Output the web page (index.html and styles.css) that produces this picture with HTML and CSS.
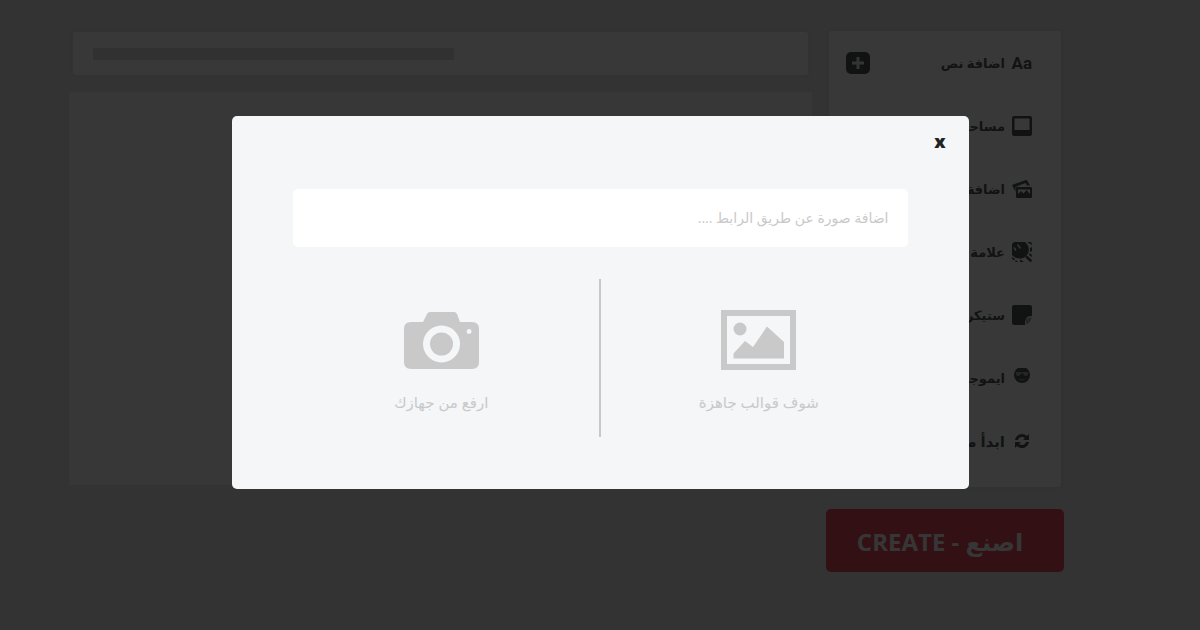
FILE: index.html
```
<!DOCTYPE html>
<html lang="ar" dir="rtl">

<head>
    <meta charset="UTF-8">
    <meta name="viewport" content="width=device-width, initial-scale=1.0">
    <title>اصنع - CREATE</title>
    <link rel="stylesheet" href="styles.css">
</head>

<body>
    <div class="page">
        <aside class="side">
            <ul class="tools">
                <li class="tool">
                    <span class="tool-icon letters">Aa</span>
                    <span class="tool-name">اضافة نص</span>
                    <button class="add" type="button" aria-label="اضافة">
                        <svg viewBox="0 0 24 22"><path d="M10.500 5h3v4.500H18v3h-4.500V17h-3v-4.500H6v-3h4.500z"/></svg>
                    </button>
                </li>
                <li class="tool">
                    <svg class="tool-icon" viewBox="0 0 20 20"><path fill-rule="evenodd" d="M2 0h16q2 0 2 2v16q0 2-2 2H2q-2 0-2-2V2q0-2 2-2zM2.500 2.500v11.500h15V2.500z"/></svg>
                    <span class="tool-name">مساحة</span>
                </li>
                <li class="tool">
                    <svg class="tool-icon" viewBox="0 0 20 20"><path d="M0 6 14 1q1 0 1.500 1L18 6.500h-3L13.500 4 3.500 8v5z"/><path fill-rule="evenodd" d="M5 8h14q1 0 1 1v9q0 1-1 1H5q-1 0-1-1V9q0-1 1-1zM6 10.500V15l3-3 2.500 2.500 3-3.500 3.500 4v-4.500z"/></svg>
                    <span class="tool-name">اضافة صورة</span>
                </li>
                <li class="tool">
                    <svg class="tool-icon" viewBox="0 0 20 20"><path fill-rule="evenodd" d="M0 2 2 0h11c5 4 5 11 1 14-4 4-10 3-14-1zM6 2 5 3l3 4 1-1zM2.500 5l-1 1 2 3 1-1z"/><path d="M15 0h3q2 0 2 2v1zM18 6l2-1v4l-2 1zM17.500 11l2.500 2v2l-3-2zM13 15l2-1.500 5 4.500q0 2-2 2zM8 17.500l4 2.500H8zM0 15l3 2-1 1.500L0 17zM4 18l2 2H3z"/></svg>
                    <span class="tool-name">علامة مائية</span>
                </li>
                <li class="tool">
                    <svg class="tool-icon" viewBox="0 0 20 20"><path d="M2 0h16q2 0 2 2v9c-5 0-7 2-7 9H2q-2 0-2-2V2q0-2 2-2z"/><path class="fold" d="M13.500 19.500c1-2 0-4 1-5.500 2-1.500 4-1 5-2.500 0 4-2 7-6 8z"/></svg>
                    <span class="tool-name">ستيكرز</span>
                </li>
                <li class="tool">
                    <svg class="tool-icon" viewBox="0 0 20 20"><circle cx="10" cy="7" r="8"/><path class="fold" d="M3.500 4h5l1.500.500 1.500-.500h5l-1 3.500c-1.500 1-3.500.500-4.500-2h-2c-1 2.500-3 3-4.500 2zM6 10.500q4 2 8 0-4 4-8 0z"/></svg>
                    <span class="tool-name">ايموجي</span>
                </li>
                <li class="tool">
                    <svg class="tool-icon" viewBox="0 0 20 20"><path d="M3 9c1-6 8-8 12-4l2-2v6h-6l2-2c-3-2-6-1-7 2zM17 11c-1 6-8 8-12 4l-2 2v-6h6l-2 2c3 2 6 1 7-2z"/></svg>
                    <span class="tool-name big">ابدأ من جديد</span>
                </li>
            </ul>
            <button class="create" type="button">اصنع - CREATE</button>
        </aside>
        <main class="work">
            <div class="topbar">
                <div class="line"></div>
            </div>
            <div class="canvas"></div>
        </main>
    </div>

    <!-- نافذة اضافة صورة -->
    <div class="overlay">
        <div class="modal" role="dialog" aria-label="اضافة صورة">
            <div class="modal-head">
                <button class="close" type="button">x</button>
            </div>
            <form class="link-form">
                <input class="link-input" type="text" aria-label="رابط الصورة" placeholder="اضافة صورة عن طريق الرابط ....">
            </form>
            <div class="options">
                <button class="option" type="button">
                    <svg class="option-icon" viewBox="0 0 75 60"><path fill-rule="evenodd" d="M0 0h75v60H0zM6 6v48h63V6z"/><circle cx="19" cy="19" r="6.500"/><path d="M12.500 48.500v-5L24 31l8 6 14-20.500 17 15.500v16.500z"/></svg>
                    <span>شوف قوالب جاهزة</span>
                </button>
                <div class="divider"></div>
                <button class="option" type="button">
                    <svg class="option-icon" viewBox="0 0 75 60"><path fill-rule="evenodd" d="M7 12h12l4-8q1-2 3-2h24q2 0 3 2l3 8h12q7 0 7 7v33q0 7-7 7H7q-7 0-7-7V19q0-7 7-7zM37.500 15.500a18.500 18.500 0 1 0 .1 0zM65 19a2.500 2.500 0 1 0 .1 5 2.500 2.500 0 0 0-.1-5z"/><circle cx="37.500" cy="34" r="11.500"/></svg>
                    <span>ارفع من جهازك</span>
                </button>
            </div>
        </div>
    </div>
</body>

</html>
```
FILE: styles.css
```
* {
    box-sizing: border-box;
}

body {
    margin: 0;
    background: #e8e8e8;
    font-family: "Open Sans", "DejaVu Sans", sans-serif;
}

button,
input {
    font-family: inherit;
    border: 0;
}

button {
    padding: 0;
    background: none;
    cursor: pointer;
}

.page {
    display: flex;
    gap: 14px;
    min-height: 100vh;
    padding: 28px 136px 58px 69px;
}

.side {
    width: 238px;
}

.tools {
    margin: 0 0 19px;
    padding: 0 0 15px;
    list-style: none;
    background: #fff;
    border: 3px solid #e2e2e2;
    border-radius: 6px;
}

.tool {
    display: flex;
    align-items: center;
    gap: 7px;
    height: 63px;
    padding: 0 29px 0 17px;
    color: #505858;
    font-size: 13px;
    font-weight: bold;
    white-space: nowrap;
}

.tool-icon {
    width: 20px;
    height: 20px;
    fill: #505858;
}

.letters {
    font-family: Roboto, sans-serif;
    font-size: 17px;
    line-height: 20px;
}

.fold {
    fill: #aaa;
}

.big {
    font-size: 15px;
}

.add {
    width: 24px;
    height: 22px;
    margin-right: auto;
    background: #505858;
    border-radius: 5px;
}

.add svg {
    display: block;
    fill: #e8e8e8;
}

.create {
    width: 100%;
    height: 63px;
    padding: 2px 10px 0 0;
    background: #e8485a;
    border-radius: 5px;
    color: #f4f4f4;
    font-size: 24px;
    font-weight: bold;
}

.work {
    flex: 1;
}

.topbar {
    margin: 1px 1px 14px;
    padding: 16px 20px 15px;
    background: #fff;
    border: 3px solid #e2e2e2;
    border-radius: 6px;
}

.line {
    width: 52%;
    height: 12px;
    margin-right: auto;
    background: #dedede;
}

.canvas {
    height: 393px;
    background: #f8f8f8;
}

.overlay {
    position: fixed;
    inset: 0;
    padding: 116px 20px 20px;
    background: rgba(0, 0, 0, 0.78);
}

.modal {
    max-width: 737px;
    margin: 0 auto;
    padding-bottom: 52px;
    background: #f4f6f8;
    border-radius: 5px;
}

.modal-head {
    height: 73px;
    padding: 13px 23px;
}

.close {
    color: #222;
    font-size: 18px;
    font-weight: 800;
    line-height: 24px;
}

.link-form {
    padding: 0 61px;
}

.link-input {
    display: block;
    width: 100%;
    height: 58px;
    padding: 0 19px 2px;
    background: #fff;
    border-radius: 5px;
    font-size: 14px;
}

.link-input::placeholder {
    color: #c9c9c9;
    opacity: 1;
}

.options {
    display: flex;
    margin: 32px 52px 0;
}

.option {
    flex: 1;
    display: flex;
    flex-direction: column;
    align-items: center;
    gap: 20px;
    height: 158px;
    padding-top: 31px;
    color: #c9c9c9;
    font-size: 15px;
    line-height: 24px;
}

.option-icon {
    width: 75px;
    height: 60px;
    fill: #c9c9c9;
}

.divider {
    width: 2px;
    background: #c9c9c9;
}
```
